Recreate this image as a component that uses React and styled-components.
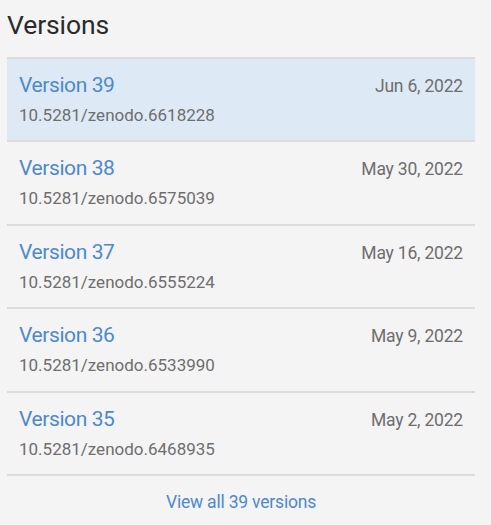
import React from "react";
import styled, { createGlobalStyle } from "styled-components";

const GlobalStyle = createGlobalStyle`
    body {
        margin: 0;
        background: #f4f4f4;
        font-family: Roboto, "Liberation Sans", sans-serif;
    }
`;

const versions = [
    { n: 39, date: "Jun 6, 2022", doi: "10.5281/zenodo.6618228", active: true },
    { n: 38, date: "May 30, 2022", doi: "10.5281/zenodo.6575039" },
    { n: 37, date: "May 16, 2022", doi: "10.5281/zenodo.6555224" },
    { n: 36, date: "May 9, 2022", doi: "10.5281/zenodo.6533990" },
    { n: 35, date: "May 2, 2022", doi: "10.5281/zenodo.6468935" },
];

function App () {
    return (
        <>
        <GlobalStyle />
        <Panel>
            <Title>Versions</Title>
            <List>
                {versions.map(v => (
                    <Row key={v.n} $active={v.active}>
                        <TopLine>
                            <VersionLink href="#">Version {v.n}</VersionLink>
                            <DateText>{v.date}</DateText>
                        </TopLine>
                        <Doi>{v.doi}</Doi>
                    </Row>
                ))}
            </List>
            <Footer>
                <AllLink href="#">View all 39 versions</AllLink>
            </Footer>
        </Panel>
        </>
    );
}
export default App;

const Panel = styled.div`
    width: 468px;
    padding: 0 7px;
`;

const Title = styled.h2`
    margin: 0;
    padding-top: 9px;
    height: 57px;
    box-sizing: border-box;
    font-size: 26.5px;
    font-weight: 400;
    line-height: 32px;
    letter-spacing: -0.1px;
    color: #2a2a2a;
`;

const List = styled.div`
    border-top: 2px solid #dcdcdc;
`;

const Row = styled.div`
    height: 83.4px;
    padding: 13px 12px 0 12px;
    box-sizing: border-box;
    background: ${props => props.$active ? "#ddeaf6" : "transparent"};
    border-bottom: 2px solid #dcdcdc;
`;

const TopLine = styled.div`
    display: flex;
    justify-content: space-between;
    align-items: baseline;
`;

const VersionLink = styled.a`
    font-size: 21px;
    line-height: 26px;
    letter-spacing: -0.4px;
    color: #4d89cb;
    text-decoration: none;
`;

const DateText = styled.span`
    font-size: 17.5px;
    letter-spacing: -0.2px;
    color: #6e6e6e;
`;

const Doi = styled.div`
    margin-top: 6px;
    font-size: 17px;
    line-height: 22px;
    color: #6e6e6e;
`;

const Footer = styled.div`
    text-align: center;
    padding-top: 16px;
`;

const AllLink = styled.a`
    font-size: 17.5px;
    letter-spacing: -0.2px;
    color: #4d89cb;
    text-decoration: none;
`;
